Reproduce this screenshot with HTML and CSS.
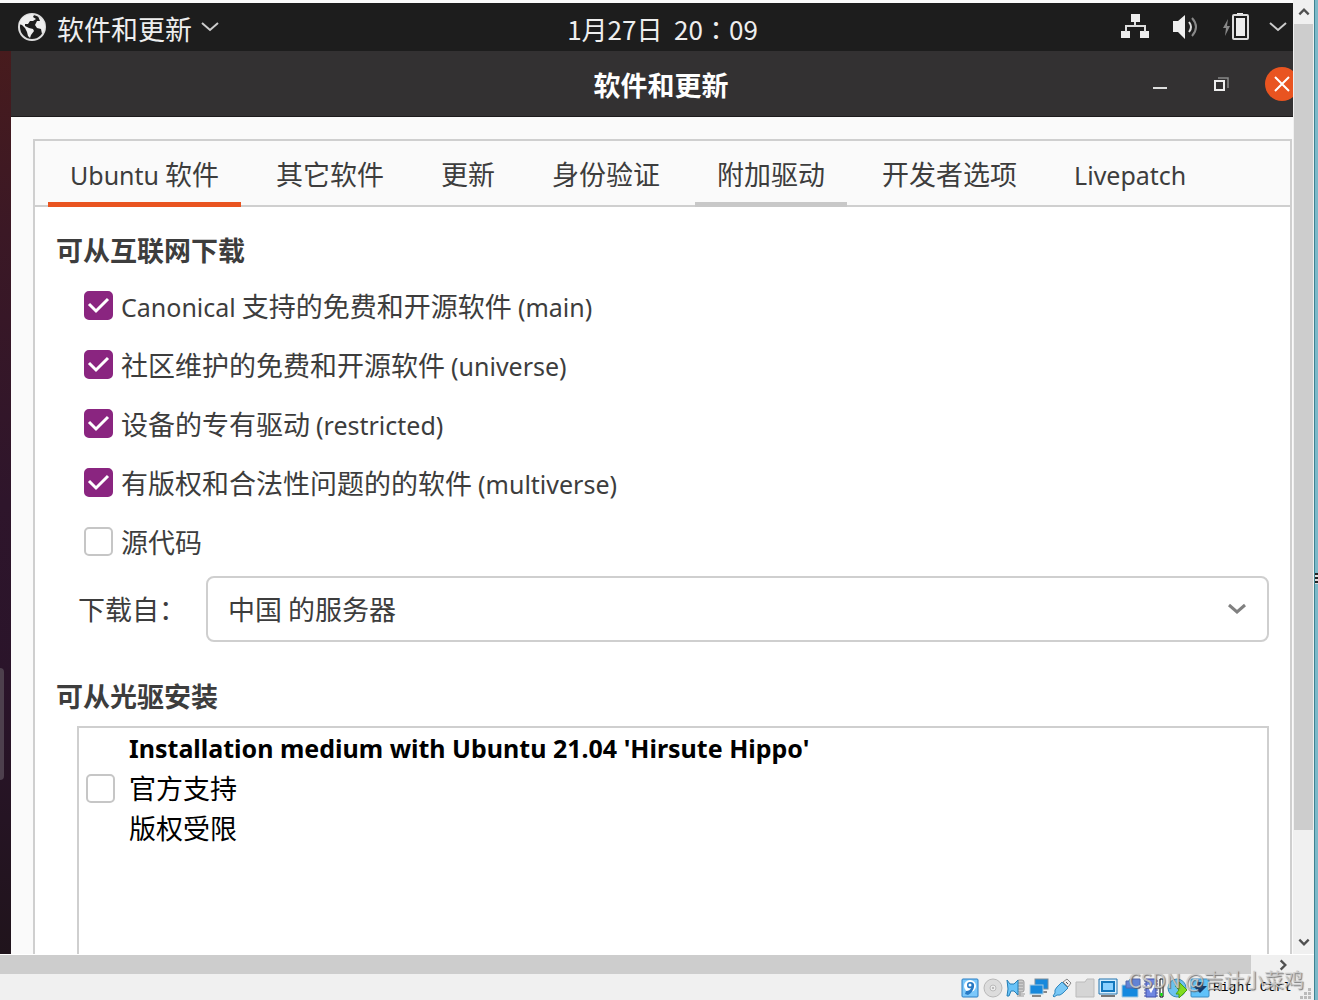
FILE: index.html
```html
<!DOCTYPE html>
<html lang="zh-CN">

<head>
  <meta charset="UTF-8" />
  <meta name="viewport" content="width=device-width, initial-scale=1.0" />
  <title>软件和更新</title>
  <link rel="stylesheet" href="styles.css">
</head>

<body>
  <div class="viewer">
    <div class="main">
      <div class="screen">
        <header class="topbar">
          <button class="app-menu">
            <svg class="globe" viewBox="0 0 30 30">
              <circle cx="15" cy="15" r="13" fill="none" stroke="#ddd" stroke-width="2" />
              <path d="M2 12 L5 6 L10 3 L15 2 L17 3 L16 5 L19 7 L16 9 L13 9 L11 12 L8 12 L8 14 L12 16 L16 17 L17 19 L14 23 L13 26 L11 24 L10 20 L8 16 L5 13 Z M21 4 L26 8 L28 14 L27 19 L25 22 L24 17 L20 16 L18 13 L20 9 L23 9 Z" fill="#eee" />
            </svg>
            <span>软件和更新</span>
            <svg class="chevron" viewBox="0 0 20 12"><path d="M2 2 L10 9 L18 2" /></svg>
          </button>
          <time class="clock" lang="zh-TW">1月27日&nbsp; 20：09</time>
          <button class="tray" aria-label="系统">
            <svg class="tray-icon" viewBox="0 0 28 28">
              <path d="M10 1h9v8h-9zM0 18h9v7H0zM19 18h9v7h-9z" fill="#eee" />
              <path d="M14 9v4M5 19v-6h19v6" fill="none" stroke="#ddd" stroke-width="2" />
            </svg>
            <svg class="tray-icon" viewBox="0 0 28 28">
              <path d="M1 8h5l7-6v24l-7-7H1z" fill="#eee" />
              <path d="M17 9q4 5 0 10" fill="none" stroke="#ddd" stroke-width="2" />
              <path d="M20 5q8 9 0 18" fill="none" stroke="#888" stroke-width="2" />
            </svg>
            <svg class="tray-icon" viewBox="0 0 28 28">
              <path d="M5 6L0 15h3l-1 8 5-10H4z" fill="#888" />
              <path d="M14 0h6v3h-6z" fill="#eee" />
              <rect x="10" y="2" width="15" height="24" rx="1" fill="none" stroke="#ddd" stroke-width="2" />
              <path d="M13 5h9v18h-9z" fill="#eee" />
            </svg>
            <svg class="chevron" viewBox="0 0 20 12"><path d="M2 2 L10 9 L18 2" /></svg>
          </button>
        </header>

        <div class="desktop">
          <div class="dock"><span class="dock-tab"></span></div>
          <section class="window">
            <div class="titlebar">
              <h1>软件和更新</h1>
              <div class="window-buttons">
                <button aria-label="最小化"><svg viewBox="0 0 16 16"><path d="M1 12h14" stroke="#ddd" stroke-width="2" /></svg></button>
                <button aria-label="还原">
                  <svg viewBox="0 0 16 16" fill="none">
                    <path d="M5 2h10v10" stroke="#888" stroke-width="1.5" />
                    <path d="M2 5h9v9H2z" stroke="#eee" stroke-width="2" />
                  </svg>
                </button>
                <button class="close" aria-label="关闭"><svg viewBox="0 0 16 16"><path d="M1 1l14 14M15 1L1 15" stroke="#fff" stroke-width="2" /></svg></button>
              </div>
            </div>

            <div class="content">
              <div class="notebook">
                <nav class="tabs">
                  <button class="tab active"><span class="latin">Ubuntu</span> 软件</button>
                  <button class="tab">其它软件</button>
                  <button class="tab">更新</button>
                  <button class="tab">身份验证</button>
                  <button class="tab hover">附加驱动</button>
                  <button class="tab">开发者选项</button>
                  <button class="tab"><span class="latin">Livepatch</span></button>
                </nav>

                <div class="page">
                  <h2>可从互联网下载</h2>
                  <div class="checks">
                    <label><input type="checkbox" checked><span><span class="latin">Canonical</span> 支持的免费和开源软件 <span class="latin">(main)</span></span></label>
                    <label><input type="checkbox" checked><span>社区维护的免费和开源软件 <span class="latin">(universe)</span></span></label>
                    <label><input type="checkbox" checked><span>设备的专有驱动 <span class="latin">(restricted)</span></span></label>
                    <label><input type="checkbox" checked><span>有版权和合法性问题的的软件 <span class="latin">(multiverse)</span></span></label>
                    <label><input type="checkbox"><span>源代码</span></label>
                  </div>
                  <div class="server">
                    <label for="server">下载自：</label>
                    <select id="server">
                      <option>中国 的服务器</option>
                    </select>
                  </div>

                  <h2>可从光驱安装</h2>
                  <div class="cdrom">
                    <input type="checkbox" id="cdrom">
                    <label for="cdrom">
                      <strong class="latin">Installation medium with Ubuntu 21.04 'Hirsute Hippo'</strong>
                      <span>官方支持</span>
                      <span>版权受限</span>
                    </label>
                  </div>
                </div>
              </div>
            </div>
          </section>
        </div>
      </div>

      <div class="scroll-y">
        <button aria-label="向上滚动"><svg viewBox="0 0 12 12"><path d="M2 8l4-4 4 4" /></svg></button>
        <div class="track"><div class="thumb"></div></div>
        <button aria-label="向下滚动"><svg viewBox="0 0 12 12"><path d="M2 4l4 4 4-4" /></svg></button>
      </div>
    </div>

    <div class="scroll-x">
      <div class="track"><div class="thumb"></div></div>
      <button aria-label="向右滚动"><svg viewBox="0 0 12 12"><path d="M4 2l4 4-4 4" /></svg></button>
    </div>

    <footer class="statusbar">
      <!-- hard disk -->
      <svg viewBox="0 0 20 20">
        <rect x="2" y="1" width="16" height="18" rx="1" fill="#7cc8fb" stroke="#2b7fc4" />
        <circle cx="10" cy="8" r="6" fill="#fff" />
        <path d="M10 4q5 0 4 5-1 5-6 8l-3-1 1-3q4 0 5-3-4 1-4-3 0-3 3-3z" fill="#2779c4" />
        <circle cx="10" cy="7" r="1.5" fill="#fff" />
      </svg>
      <!-- optical -->
      <svg viewBox="0 0 20 20">
        <circle cx="10" cy="10" r="9" fill="#dcdcdc" stroke="#b8b8b8" />
        <circle cx="10" cy="10" r="3" fill="#ececec" stroke="#bbb" />
        <circle cx="10" cy="10" r="1" fill="#aaa" />
      </svg>
      <!-- audio -->
      <svg viewBox="0 0 20 20">
        <rect x="11" y="2" width="7" height="12" rx="2" fill="#ccc" stroke="#999" />
        <path d="M12 5h5M12 8h5M12 11h5M10 16h9M14 14v4M11 18h7" stroke="#999" fill="none" />
        <path d="M1 2l3 4h4l4-4v15l-4-4H5l-2 5H1l1-7z" fill="#69c3f8" stroke="#277fb5" />
      </svg>
      <!-- network -->
      <svg viewBox="0 0 20 20">
        <rect x="6" y="1" width="13" height="10" fill="#1789dc" stroke="#7d8d99" />
        <path d="M14 14h4" stroke="#888" stroke-width="2" />
        <rect x="1" y="7" width="13" height="9" fill="#1789dc" stroke="#a5c9e0" />
        <path d="M3 18h9" stroke="#888" stroke-width="2" />
      </svg>
      <!-- usb -->
      <svg viewBox="0 0 20 20">
        <path d="M11 4l4-3 4 4-3 4z" fill="#eee" stroke="#888" />
        <path d="M14 4l2 2" stroke="#555" />
        <path d="M10 4l6 6-5 5q-3 3-6 2l-3 2-1-1 2-3q-1-3 2-6z" fill="#79c8f6" stroke="#3287bd" />
      </svg>
      <!-- shared folder -->
      <svg viewBox="0 0 20 20"><path d="M1 4h9l2-3h7v18H1z" fill="#d5d5d5" stroke="#bbb" /></svg>
      <!-- display -->
      <svg viewBox="0 0 20 20">
        <path d="M1 1h18v15H1z" fill="#d7efff" stroke="#2575ae" />
        <path d="M4 4h12v9H4z" fill="#8bd1ff" stroke="#1377bd" stroke-width="2" />
        <path d="M3 18h14" stroke="#777" stroke-width="2" />
      </svg>
      <!-- recording -->
      <svg viewBox="0 0 20 20">
        <path d="M1 7h16v12H1z" fill="#1489df" stroke="#a5c9e0" />
        <path d="M5 3h3l1-2h10v9H5z" fill="#6283d5" stroke="#5368ae" />
      </svg>
      <!-- cpu and memory -->
      <svg viewBox="0 0 20 20">
        <path d="M0 3h14M0 6h14M0 9h14M0 12h14M0 15h14M0 18h14" stroke="#4350aa" />
        <path d="M2 1h10v18H2z" fill="#6f86e2" stroke="#4350aa" />
        <path d="M4 7l3 6 3-6" fill="none" stroke="#fff" stroke-width="2" />
        <path d="M16 1h3v18h-3z" fill="#fff" stroke="#000" />
        <path d="M16.5 15h2v3h-2z" fill="#0e0" />
      </svg>
      <!-- mouse integration -->
      <svg viewBox="0 0 20 20">
        <circle cx="10" cy="10" r="9" fill="#6cc2ef" stroke="#3889b8" />
        <path d="M8 8h4V4l8 8-8 8v-4H9l3-4z" fill="#82dc20" stroke="#4c9f10" />
      </svg>
      <!-- keyboard capture -->
      <svg viewBox="0 0 20 20">
        <rect x="1" y="1" width="18" height="18" rx="1" fill="#5fc2fa" stroke="#3b8bc3" />
        <path d="M7 4h6v4h4l-7 7-7-7h4z" fill="#123c70" />
      </svg>
      <span class="host-key">Right Ctrl</span>
      <svg class="grip" viewBox="0 0 12 12"><path d="M8 0h3v3H8zM4 4h3v3H4zM8 4h3v3H8zM0 8h3v3H0zM4 8h3v3H4zM8 8h3v3H8z" fill="#bbb" /></svg>
      <span class="watermark">CSDN @吉计小菜鸡</span>
    </footer>
  </div>
  <div class="edge"></div>
</body>

</html>
```
FILE: styles.css
```css
* {
  box-sizing: border-box;
}

body {
  margin: 0;
  height: 100vh;
  display: flex;
  overflow: hidden;
  background: #fafafa;
  color: #3d3d3d;
  font: 27px/40px "Noto Sans CJK SC", sans-serif;
}

button {
  margin: 0;
  padding: 0;
  border: none;
  background: none;
  color: inherit;
  font: inherit;
}

h1,
h2 {
  margin: 0;
  font-size: inherit;
  font-weight: bold;
}

svg {
  display: block;
}

.latin {
  font-family: "Noto Sans", sans-serif;
  font-size: 25px;
  line-height: 1;
}

.viewer {
  flex: 1;
  min-width: 0;
  display: flex;
  flex-direction: column;
}

.main {
  flex: 1;
  min-height: 0;
  display: flex;
}

.screen {
  flex: 1;
  min-width: 0;
  display: flex;
  flex-direction: column;
  padding-top: 3px;
  overflow: hidden;
}

/* top panel */
.topbar {
  flex: none;
  height: 48px;
  display: grid;
  grid-template-columns: 1fr auto 1fr;
  align-items: center;
  padding: 0 5px 0 17px;
  background: #1d1d1d;
  color: #eee;
}

.app-menu,
.tray {
  display: flex;
  align-items: center;
}

.app-menu {
  gap: 10px;
}

.app-menu span {
  padding-top: 3px;
}

.app-menu .chevron {
  margin-left: -2px;
}

.globe {
  width: 30px;
  height: 30px;
}

.chevron {
  width: 20px;
  height: 12px;
  fill: none;
  stroke: #ccc;
  stroke-width: 2;
}

.clock {
  padding: 4px 0 0 20px;
  font-family: "Noto Sans CJK TC", sans-serif;
  font-size: 26px;
}

.tray {
  justify-content: flex-end;
  gap: 23px;
}

.tray .chevron {
  margin-left: -6px;
}

.tray-icon {
  width: 28px;
  height: 28px;
}

/* desktop and window */
.desktop {
  flex: 1;
  min-height: 0;
  display: flex;
}

.dock {
  flex: none;
  width: 11px;
  display: flex;
  align-items: flex-end;
  padding-bottom: 174px;
  background: linear-gradient(#471b1d, #3b1825 20%, #2e152b 50%, #2a142a 70%, #20141c);
}

.dock-tab {
  width: 4px;
  height: 112px;
  border-radius: 0 4px 4px 0;
  background: #4d404d;
}

.window {
  flex: 1;
  min-width: 0;
  display: flex;
  flex-direction: column;
}

.titlebar {
  flex: none;
  height: 66px;
  display: grid;
  grid-template-columns: 1fr auto 1fr;
  align-items: center;
  border-bottom: 1px solid #1d1b1c;
  background: #333132;
  color: #fff;
}

.titlebar h1 {
  grid-column: 2;
  padding: 2px 0 0 18px;
}

.window-buttons {
  display: flex;
  justify-content: flex-end;
  gap: 27px;
  margin-right: -6px;
}

.window-buttons button {
  width: 34px;
  height: 34px;
  display: grid;
  place-items: center;
  border-radius: 50%;
}

.window-buttons svg {
  width: 16px;
  height: 16px;
}

.window-buttons .close {
  background: #e95420;
}

.content {
  flex: 1;
  min-height: 0;
  padding: 22px 1px 0 22px;
  background: #fafafa;
}

.notebook {
  height: 100%;
  display: flex;
  flex-direction: column;
  border: 2px solid #cfcfcf;
  border-bottom: none;
  background: #fff;
}

.tabs {
  flex: none;
  height: 66px;
  display: flex;
  gap: 13px;
  padding-left: 13px;
  border-bottom: 2px solid #cfcfcf;
  background: #fafafa;
}

.tab {
  height: 66px;
  padding: 4px 22px 0;
  border-bottom: 5px solid transparent;
}

.tab.active {
  border-color: #e95420;
}

.tab.hover {
  border-color: #c8c8c8;
}

.page {
  flex: 1;
  min-height: 0;
  display: flex;
  flex-direction: column;
  padding: 23px 21px 0;
}

.checks {
  padding: 6px 0 0 28px;
}

.checks label {
  height: 59px;
  display: flex;
  align-items: center;
  gap: 8px;
}

.checks input {
  margin-bottom: 2px;
}

input[type="checkbox"] {
  appearance: none;
  flex: none;
  width: 29px;
  height: 29px;
  margin: 0;
  border: 2px solid #c6c6c6;
  border-radius: 5px;
  background: #fff;
}

input[type="checkbox"]:checked {
  border-color: #8a2580;
  background: #8a2580 url("data:image/svg+xml,%3Csvg xmlns='http://www.w3.org/2000/svg' viewBox='0 0 25 25'%3E%3Cpath d='M3 11l7 7L22 6' fill='none' stroke='%23fff' stroke-width='3'/%3E%3C/svg%3E");
}

.server {
  display: flex;
  align-items: center;
  padding: 5px 0 0 22px;
  margin-bottom: 34px;
}

.server label {
  width: 128px;
}

.server select {
  appearance: none;
  flex: 1;
  height: 66px;
  padding: 0 20px;
  border: 2px solid #cfcfcf;
  border-radius: 8px;
  background: #fff url("data:image/svg+xml,%3Csvg xmlns='http://www.w3.org/2000/svg' viewBox='0 0 20 12'%3E%3Cpath d='M2 2l8 7 8-7' fill='none' stroke='%23808080' stroke-width='3'/%3E%3C/svg%3E") no-repeat right 20px center / 20px 12px;
  color: inherit;
  font: inherit;
}

.cdrom {
  flex: 1;
  display: flex;
  align-items: flex-start;
  gap: 14px;
  margin: 10px 0 0 21px;
  padding: 0 7px;
  border: 2px solid #cfcfcf;
  border-bottom: none;
  color: #000;
}

.cdrom input {
  margin-top: 46px;
}

.cdrom label {
  display: flex;
  flex-direction: column;
}

.cdrom strong {
  line-height: 40px;
}

/* host scrollbars */
.scroll-y,
.scroll-x {
  flex: none;
  display: flex;
  background: #f0f0f0;
}

.scroll-y {
  flex-direction: column;
  width: 21px;
}

.scroll-x {
  height: 20px;
  padding-right: 21px;
  border-top: 1px solid #fff;
}

.scroll-y button,
.scroll-x button {
  display: grid;
  place-items: center;
}

.scroll-y button {
  height: 24px;
}

.scroll-x button {
  width: 21px;
}

.scroll-y svg,
.scroll-x svg {
  width: 14px;
  height: 14px;
  fill: none;
  stroke: #505050;
  stroke-width: 2;
}

.track {
  flex: 1;
}

.scroll-y .thumb {
  height: 89%;
  margin: 0 1px;
  background: #cdcdcd;
}

.scroll-x .thumb {
  width: calc(100% - 21px);
  height: 100%;
  background: #cdcdcd;
}

/* status bar */
.statusbar {
  flex: none;
  position: relative;
  height: 26px;
  display: flex;
  align-items: center;
  justify-content: flex-end;
  gap: 3px;
  padding: 2px 2px 0 0;
  background: #f0f0f0;
}

.statusbar svg {
  width: 20px;
  height: 20px;
}

.statusbar .grip {
  align-self: flex-end;
  width: 12px;
  height: 12px;
}

.host-key {
  margin-right: 6px;
  color: #000;
  font: 13px/20px "Liberation Mono", monospace;
}

.watermark {
  position: absolute;
  right: 10px;
  bottom: 6px;
  color: rgba(205, 205, 205, 0.85);
  font-size: 20px;
  line-height: 28px;
  text-shadow: 1px 1px 1px rgba(90, 90, 90, 0.8);
}

.edge {
  flex: none;
  width: 4px;
  display: flex;
  flex-direction: column;
  justify-content: center;
  padding-top: 156px;
  border-left: 1px solid #3f8291;
  background: #7cb9c9;
}

.edge::before {
  content: "";
  height: 11px;
  background: repeating-linear-gradient(#222 0 2px, #ddd 2px 4px);
}
```
